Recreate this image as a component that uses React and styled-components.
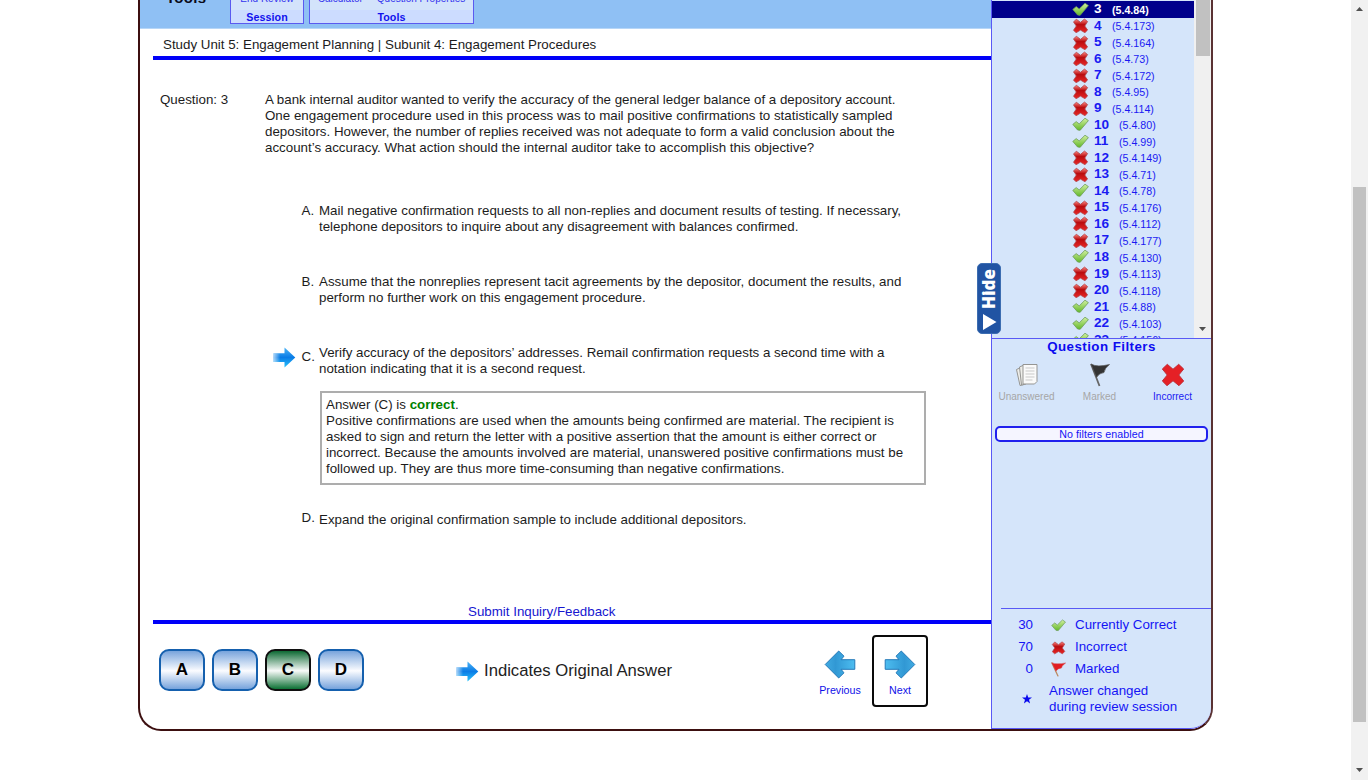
import React from "react";
import styled, { createGlobalStyle } from "styled-components";

const Global = createGlobalStyle`
  *, *::before, *::after { box-sizing: border-box; }
  html, body { margin: 0; height: 780px; overflow: hidden; background: #fff; }
  body { font-family: "Liberation Sans", Arial, sans-serif; font-size: 10pt; line-height: 16px; color: #1c1c1c; }
`;

const BLUE = "#1414f5";

const Page = styled.div`display: flex; justify-content: space-between; align-items: flex-start; width: 1368px; height: 780px; padding-left: 138px; overflow: hidden;`;
const Shell = styled.div`display: flex; width: 1075px; height: 731px; border: 2px solid #3c0f10; border-top: 0; border-right-color: #5a3233; border-radius: 0 0 23px 23px; overflow: hidden;`;
const Main = styled.main`width: 851px; display: flex; flex-direction: column;`;
const ToolBar = styled.header`height: 29px; flex: none; display: flex; align-items: flex-end; padding-bottom: 4px; background: #8fc0f4; border-bottom: 1px solid #b7d6f7;`;
const ToolTitle = styled.h1`width: 90px; margin: 0; padding-left: 26px; height: 34px; font-size: 15px; line-height: 16px; color: #0a0a18; letter-spacing: .3px;`;
const ToolGroup = styled.section`width: ${p => p.$w}px; height: 46px; margin-right: 5px; flex: none; border: 1px solid #5a5af0; background: #d3e3fb; display: flex; flex-direction: column; justify-content: flex-end;`;
const ToolItems = styled.div`display: flex; justify-content: center; gap: ${p => p.$gap || 0}px; height: 17px; font-size: 10px; line-height: 12px; color: #3232ee; white-space: nowrap;`;
const ToolCaption = styled.div`height: 13px; background: #ccdcff; text-align: center; font-weight: bold; font-size: 8pt; line-height: 15px; letter-spacing: .1px; color: #1010ee;`;

const UnitTitle = styled.h2`margin: 8px 0 0 23px; height: 19px; font-size: 10pt; font-weight: normal; line-height: 16px; white-space: nowrap;`;
const Rule = styled.hr`width: 838px; height: 4px; margin: 0 0 0 13px; border: 0; background: #0000f8; flex: none;`;
const QuestionRow = styled.div`display: grid; grid-template-columns: 105px 1fr; padding: 32px 0 0 20px; height: 143px;`;
const Label = styled.div`white-space: nowrap;`;
const Line = styled.div`height: 16px; white-space: nowrap;`;
const Option = styled.div`display: grid; grid-template-columns: 29px 17px 1fr; height: ${p => p.$h}px; padding-left: 133px;`;
const Letter = styled.span`padding-top: ${p => p.$drop || 0}px; margin-left: -.5px;`;
const OptionText = styled.div`padding-top: ${p => p.$drop || 0}px;`;
const Pointer = styled.span`padding-top: 2px; margin-left: 0;`;
const Explanation = styled.div`width: 606px; height: 94px; margin-left: 180px; padding: 4px 0 0 4px; border: 2px solid #adadad; flex: none;`;
const Correct = styled.b`color: #008000;`;
const Feedback = styled.a`display: block; margin-left: 328px; height: 17px; line-height: 18px; color: #1616d0; flex: none;`;
const Footer = styled.footer`display: flex; align-items: flex-start; padding: 11px 0 0 19px;`;
const Answers = styled.div`display: flex; gap: 7px; padding-top: 14px;`;
const AnswerButton = styled.button`width: 46px; height: 42px; padding: 0; border: 2px solid ${p => p.$chosen ? "#101010" : "#1560ae"}; border-radius: 10px; font: bold 17px/34px "Liberation Sans", Arial, sans-serif; color: #000;
  background: ${p => p.$chosen ? "linear-gradient(#0e6a34,#f8faf9 52%,#0c7134)" : "linear-gradient(#78a4dc,#fbfcff 52%,#76a3dc)"};`;
const Legend = styled.div`display: flex; align-items: center; gap: 5px; width: 356px; height: 20px; margin: 26px 0 0 92px; font-size: 12.5pt; color: #222; white-space: nowrap;`;
const NavButtons = styled.div`display: flex; gap: 4px;`;
const NavButton = styled.button`width: 56px; height: 72px; padding: 13px 0 0; border: 2px solid ${p => p.$focus ? "#0a0a0a" : "transparent"}; border-radius: 4px; background: #fff; display: flex; flex-direction: column; align-items: center; font: 8pt/14px "Liberation Sans", Arial, sans-serif; color: #1010e8; gap: 4px;`;

const Side = styled.aside`position: relative; width: 220px; height: 729px; border-left: 1px solid #5959f5; border-bottom: 1px solid #5959f5; border-radius: 0 0 21px 0; background: #d5e5fa; color: ${BLUE};`;
const ListBox = styled.div`display: flex; height: 338px; padding-top: 1px; overflow: hidden;`;
const Rows = styled.div`width: 202px; flex: none;`;
const Row = styled.div`display: flex; align-items: center; height: 16.53px; padding-left: 80px; white-space: nowrap; background: ${p => p.$on ? "#00008b" : "transparent"}; color: ${p => p.$on ? "#fff" : "#1a1af2"};`;
const RowNumber = styled.b`width: ${p => p.$wide ? 25 : 18}px; margin-left: 5px; font-size: 13.6px; line-height: 16px;`;
const RowCode = styled.span`font-size: 8pt; line-height: 16px; padding-top: 1px; font-weight: ${p => p.$on ? "bold" : "normal"};`;
const ListScroll = styled.div`width: 17px; height: 338px; margin: -1px 0 0; display: flex; flex-direction: column; justify-content: space-between; align-items: center; background: #f0f0f0;`;
const ListThumb = styled.div`width: 14px; height: 56px; background: #c1c1c1;`;
const Filters = styled.section`height: 270px; border-top: 1px solid #5959f5; text-align: center;`;
const FiltersTitle = styled.h3`margin: 0; font-size: 10pt; line-height: 16px; letter-spacing: .45px; color: #0c0cf0;`;
const FilterGrid = styled.div`display: grid; grid-template-columns: repeat(3, 73px); padding-top: 8px; height: 71px; margin-left: -2px;`;
const Filter = styled.div`display: flex; flex-direction: column; align-items: center; gap: 4px; font-size: 10px; line-height: 12px; color: ${p => p.$off ? "#a6a6a6" : "#1a1af2"};`;
const FilterState = styled.div`width: 213px; height: 16px; margin-left: 3px; border: 2px solid #2020ee; border-radius: 5px; background: #f5f5ff; font-size: 8pt; line-height: 12px; letter-spacing: .1px;`;
const Totals = styled.section`margin-left: 9px; border-top: 1px solid #5959f5; padding-top: 5px;`;
const Total = styled.div`display: grid; grid-template-columns: 32px 16px 1fr; column-gap: 17px; height: 22px; line-height: 22px;`;
const Count = styled.span`text-align: right;`;
const TotalIcon = styled.span`display: flex; align-items: center; margin-left: 1px;`;
const TotalName = styled.span`margin-left: -8px;`;
const Changed = styled.div`display: grid; grid-template-columns: 48px 1fr; padding-top: 3px; white-space: nowrap;`;
const Star = styled.span`padding: 9px 0 0 21px;`;
const HideTab = styled.button`position: absolute; left: -15px; top: 263px; width: 24px; height: 71px; padding: 0; border: 1px solid #3c6db1; border-radius: 5px; background: #2154a3; color: #fff; display: flex; flex-direction: column; align-items: center; justify-content: center; gap: 3px;`;
const HideText = styled.span`writing-mode: vertical-rl; transform: rotate(180deg); font: 800 17px/20px "Open Sans", sans-serif; height: 43px; text-align: center;`;
const PageScroll = styled.div`width: 17px; height: 780px; background: #f1f1f1; display: flex; flex-direction: column; align-items: center;`;
const PageThumb = styled.div`width: 13px; height: 535px; margin: 176px 0 46px; background: #c1c1c1;`;
const CaretSlot = styled.div`height: ${p => p.$h}px; display: flex; align-items: flex-end; padding-bottom: ${p => p.$lift || 0}px;`;

const CheckIcon = () => (
  <svg width="17" height="15" viewBox="0 0 17 15"><defs><linearGradient id="ck" x1="0" y1="0" x2="0" y2="1"><stop offset="0" stopColor="#d2f0a0" /><stop offset="1" stopColor="#62b82a" /></linearGradient></defs>
    <path d="M.8 7.400 4.200 4.600 7.200 6.900 13 1.200 16.400 3.600 8.200 13.300 5.600 13z" fill="url(#ck)" stroke="#6c9c58" strokeWidth=".8" strokeLinejoin="round" /></svg>
);
const CrossIcon = () => (
  <svg width="17" height="15" viewBox="0 0 17 15"><defs><linearGradient id="cr" x1="0" y1="0" x2="0" y2="1"><stop offset="0" stopColor="#ff8580" /><stop offset=".4" stopColor="#b90c0f" /><stop offset="1" stopColor="#e92727" /></linearGradient></defs>
    <path d="M1.500 4 4.300 1.200 8.500 4.300 12.500 1.100 15.600 3.600 12.800 8 15.600 12 12.900 14.700 8.500 12.100 4.200 14.700 1.500 12.300 4.300 8z" fill="url(#cr)" stroke="#b0454a" strokeWidth=".8" strokeLinejoin="round" /></svg>
);
const AnswerArrow = () => (
  <svg width="23" height="21" viewBox="0 0 23 21"><defs><linearGradient id="aa" x1="0" y1="0" x2="0" y2="1"><stop offset="0" stopColor="#4db4f6" /><stop offset=".5" stopColor="#0a7ce6" /><stop offset="1" stopColor="#29c3fb" /></linearGradient><linearGradient id="ab"><stop offset="0" stopColor="#fff" stopOpacity=".65" /><stop offset=".3" stopColor="#fff" stopOpacity="0" /></linearGradient></defs>
    {["url(#aa)", "url(#ab)"].map(f => <path key={f} d="M.5 6.200h11V.5L22.300 10.500 11.500 20.500V14.900H.5z" fill={f} />)}</svg>
);
const NavArrow = ({ back }) => (
  <svg width="32" height="29" viewBox="0 0 32 29"><defs><linearGradient id="nv"><stop offset="0" stopColor="#4dbdf0" /><stop offset=".65" stopColor="#3198d4" /><stop offset="1" stopColor="#41abe2" /></linearGradient></defs>
    <path transform={back ? "translate(32 0) scale(-1 1)" : undefined} d="M1.200 9.700H15L12 6.200 17.300 1 30.800 14.500 17.300 28 12 22.800 15 19.300H1.200z" fill="url(#nv)" stroke="#2479b8" strokeWidth="1" /></svg>
);
const FlagIcon = ({ dark, w, h }) => (
  <svg width={w} height={h} viewBox="0 0 20 24" preserveAspectRatio="none">
    <path d="M1 1 9.500 23" stroke={dark ? "#666" : "#bb8960"} strokeWidth="1.800" fill="none" />
    <path d="M1 1Q7 4.500 19.500 1.500 14.500 5.500 14 9.500 9 10 6.500 14.500z" fill={dark ? "#333" : "#e21d22"} stroke={dark ? "#555" : "#d64b4b"} strokeWidth=".7" /></svg>
);
const PagesIcon = () => (
  <svg width="24" height="24" viewBox="0 0 24 24"><g fill="#eeeeea" stroke="#959593"><path d="M1.500 6.500 6 4.500l3 17-4 1z" /><path d="M4.500 4 9 2l2 19-4.500 1z" /><path d="M8 1.500h14v17L19.500 21H8z" fill="#fafafa" /></g><path d="M10.500 5h9M10.500 8h9M10.500 11h9M10.500 14h9M10.500 17h7" stroke="#c9c9c9" /></svg>
);
const BigCross = () => (
  <svg width="24" height="24" viewBox="0 0 24 24"><path d="M1.300 6 6.300 1.300 12 6.200 17.700 1.300 22.700 6 17.800 12 22.700 18 18 22.700 12 17.800 6 22.700 1.300 18 6.200 12z" fill="#e52026" stroke="#bb2b35" strokeWidth=".9" strokeLinejoin="round" /></svg>
);
const Caret = ({ up }) => <svg width="7" height="4" viewBox="0 0 7 4"><path d={up ? "M0 4 3.500 0 7 4z" : "M0 0 3.500 4 7 0z"} fill="#505050" /></svg>;

const rows = [
  [3, 84, 1], [4, 173], [5, 164], [6, 73], [7, 172], [8, 95], [9, 114], [10, 80, 1], [11, 99, 1], [12, 149], [13, 71],
  [14, 78, 1], [15, 176], [16, 112], [17, 177], [18, 130, 1], [19, 113], [20, 118], [21, 88, 1], [22, 103, 1], [23, 156, 1],
];

export default function App() {
  return (
    <>
      <Global />
      <Page>
        <Shell>
          <Main>
            <ToolBar>
              <ToolTitle>Tools</ToolTitle>
              <ToolGroup $w={74}><ToolItems><span>End Review</span></ToolItems><ToolCaption>Session</ToolCaption></ToolGroup>
              <ToolGroup $w={165}><ToolItems $gap={14}><span>Calculator</span><span>Question Properties</span></ToolItems><ToolCaption>Tools</ToolCaption></ToolGroup>
            </ToolBar>
            <UnitTitle>Study Unit 5: Engagement Planning | Subunit 4: Engagement Procedures</UnitTitle>
            <Rule />
            <QuestionRow>
              <Label>Question: 3</Label>
              <div>
                <Line>A bank internal auditor wanted to verify the accuracy of the general ledger balance of a depository account.</Line>
                <Line>One engagement procedure used in this process was to mail positive confirmations to statistically sampled</Line>
                <Line>depositors. However, the number of replies received was not adequate to form a valid conclusion about the</Line>
                <Line>account’s accuracy. What action should the internal auditor take to accomplish this objective?</Line>
              </div>
            </QuestionRow>
            <Option $h={71}>
              <span /><Letter>A.</Letter>
              <OptionText>
                <Line>Mail negative confirmation requests to all non-replies and document results of testing. If necessary,</Line>
                <Line>telephone depositors to inquire about any disagreement with balances confirmed.</Line>
              </OptionText>
            </Option>
            <Option $h={71}>
              <span /><Letter>B.</Letter>
              <OptionText>
                <Line>Assume that the nonreplies represent tacit agreements by the depositor, document the results, and</Line>
                <Line>perform no further work on this engagement procedure.</Line>
              </OptionText>
            </Option>
            <Option $h={46}>
              <Pointer><AnswerArrow /></Pointer><Letter $drop={4}>C.</Letter>
              <OptionText>
                <Line>Verify accuracy of the depositors’ addresses. Remail confirmation requests a second time with a</Line>
                <Line>notation indicating that it is a second request.</Line>
              </OptionText>
            </Option>
            <Explanation>
              <Line>Answer (C) is <Correct>correct</Correct>.</Line>
              <Line>Positive confirmations are used when the amounts being confirmed are material. The recipient is</Line>
              <Line>asked to sign and return the letter with a positive assertion that the amount is either correct or</Line>
              <Line>incorrect. Because the amounts involved are material, unanswered positive confirmations must be</Line>
              <Line>followed up. They are thus more time-consuming than negative confirmations.</Line>
            </Explanation>
            <Option $h={118}>
              <span /><Letter $drop={25}>D.</Letter>
              <OptionText $drop={27}><Line>Expand the original confirmation sample to include additional depositors.</Line></OptionText>
            </Option>
            <Feedback>Submit Inquiry/Feedback</Feedback>
            <Rule />
            <Footer>
              <Answers>{["A", "B", "C", "D"].map(l => <AnswerButton key={l} $chosen={l === "C"}>{l}</AnswerButton>)}</Answers>
              <Legend><AnswerArrow />Indicates Original Answer</Legend>
              <NavButtons>
                <NavButton><NavArrow back />Previous</NavButton>
                <NavButton $focus><NavArrow />Next</NavButton>
              </NavButtons>
            </Footer>
          </Main>
          <Side>
            <ListBox>
              <Rows>
                {rows.map(([n, code, ok]) => (
                  <Row key={n} $on={n === 3}>{ok ? <CheckIcon /> : <CrossIcon />}<RowNumber $wide={n > 9}>{n}</RowNumber><RowCode $on={n === 3}>(5.4.{code})</RowCode></Row>
                ))}
              </Rows>
              <ListScroll><ListThumb /><CaretSlot $h={14} $lift={7}><Caret /></CaretSlot></ListScroll>
            </ListBox>
            <Filters>
              <FiltersTitle>Question Filters</FiltersTitle>
              <FilterGrid>
                <Filter $off><PagesIcon />Unanswered</Filter>
                <Filter $off><FlagIcon dark w={20} h={24} />Marked</Filter>
                <Filter><BigCross />Incorrect</Filter>
              </FilterGrid>
              <FilterState>No filters enabled</FilterState>
            </Filters>
            <Totals>
              <Total><Count>30</Count><TotalIcon><CheckIcon /></TotalIcon><TotalName>Currently Correct</TotalName></Total>
              <Total><Count>70</Count><TotalIcon><CrossIcon /></TotalIcon><TotalName>Incorrect</TotalName></Total>
              <Total><Count>0</Count><TotalIcon><FlagIcon w={15} h={15} /></TotalIcon><TotalName>Marked</TotalName></Total>
              <Changed>
                <Star><svg width="10" height="10" viewBox="0 0 9 9"><path d="M4.500 0 5.600 3.100H9L6.300 5.100 7.300 8.500 4.500 6.500 1.700 8.500 2.700 5.100 0 3.100H3.400z" fill="#0909ed" /></svg></Star>
                <div>Answer changed<br />during review session</div>
              </Changed>
            </Totals>
            <HideTab><HideText>Hide</HideText><svg width="15" height="16" viewBox="0 0 15 16"><path d="M1 0 1 16 14.500 8z" fill="#fff" /></svg></HideTab>
          </Side>
        </Shell>
        <PageScroll><CaretSlot $h={11}><Caret up /></CaretSlot><PageThumb /><Caret /></PageScroll>
      </Page>
    </>
  );
}
